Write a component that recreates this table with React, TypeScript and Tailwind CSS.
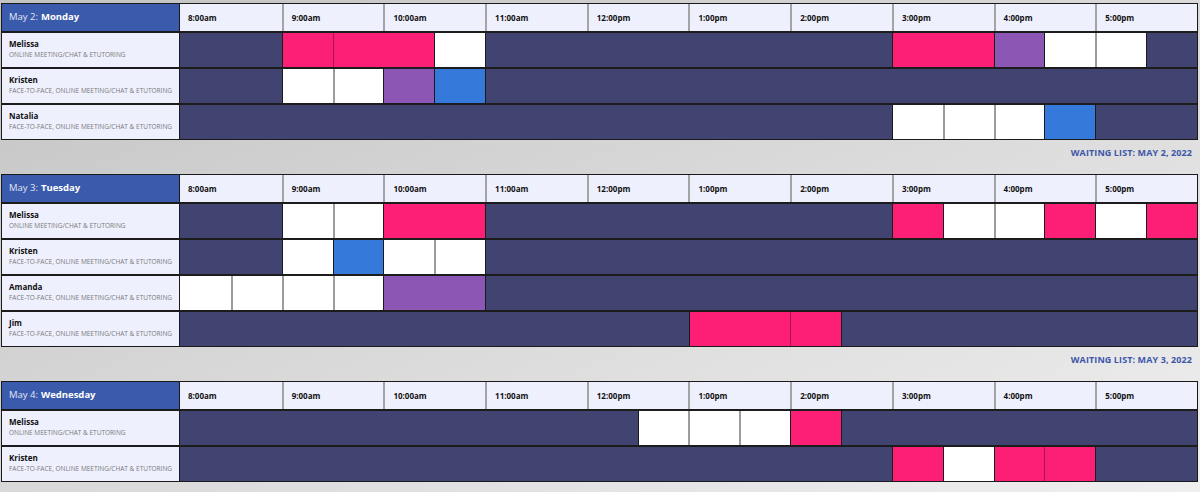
import React from "react";

type Kind = "d" | "p" | "u" | "b" | "w";
type Seg = [Kind, number];

const BG: Record<Kind, string> = {
  d: "bg-[#414370]",
  p: "bg-[#fd1f75]",
  u: "bg-[#8b56b4]",
  b: "bg-[#3579da]",
  w: "bg-white",
};

const SPAN: Record<number, string> = {
  1: "col-span-1",
  2: "col-span-2",
  3: "col-span-3",
  4: "col-span-4",
  5: "col-span-5",
  6: "col-span-6",
  7: "col-span-7",
  8: "col-span-8",
  9: "col-span-9",
  10: "col-span-10",
  11: "col-span-11",
  12: "col-span-12",
  13: "col-span-13",
  14: "col-span-14",
  15: "col-span-15",
  16: "col-span-16",
  17: "col-span-17",
  18: "col-span-18",
  19: "col-span-19",
  20: "col-span-20",
};

const TIMES = [
  "8:00am",
  "9:00am",
  "10:00am",
  "11:00am",
  "12:00pm",
  "1:00pm",
  "2:00pm",
  "3:00pm",
  "4:00pm",
  "5:00pm",
];

const ONLINE = "ONLINE MEETING/CHAT & ETUTORING";
const BOTH = "FACE-TO-FACE, ONLINE MEETING/CHAT & ETUTORING";

type Row = { name: string; mode: string; segs: Seg[] };
type Day = { date: string; day: string; wait: string; rows: Row[] };

const DAYS: Day[] = [
  {
    date: "May 2:",
    day: "Monday",
    wait: "WAITING LIST: MAY 2, 2022",
    rows: [
      {
        name: "Melissa",
        mode: ONLINE,
        segs: [["d", 2], ["p", 1], ["p", 2], ["w", 1], ["d", 8], ["p", 2], ["u", 1], ["w", 1], ["w", 1], ["d", 1]],
      },
      {
        name: "Kristen",
        mode: BOTH,
        segs: [["d", 2], ["w", 1], ["w", 1], ["u", 1], ["b", 1], ["d", 14]],
      },
      {
        name: "Natalia",
        mode: BOTH,
        segs: [["d", 14], ["w", 1], ["w", 1], ["w", 1], ["b", 1], ["d", 2]],
      },
    ],
  },
  {
    date: "May 3:",
    day: "Tuesday",
    wait: "WAITING LIST: MAY 3, 2022",
    rows: [
      {
        name: "Melissa",
        mode: ONLINE,
        segs: [["d", 2], ["w", 1], ["w", 1], ["p", 2], ["d", 8], ["p", 1], ["w", 1], ["w", 1], ["p", 1], ["w", 1], ["p", 1]],
      },
      {
        name: "Kristen",
        mode: BOTH,
        segs: [["d", 2], ["w", 1], ["b", 1], ["w", 1], ["w", 1], ["d", 14]],
      },
      {
        name: "Amanda",
        mode: BOTH,
        segs: [["w", 1], ["w", 1], ["w", 1], ["w", 1], ["u", 2], ["d", 14]],
      },
      {
        name: "Jim",
        mode: BOTH,
        segs: [["d", 10], ["p", 2], ["p", 1], ["d", 7]],
      },
    ],
  },
  {
    date: "May 4:",
    day: "Wednesday",
    wait: "WAITING LIST: MAY 4, 2022",
    rows: [
      {
        name: "Melissa",
        mode: ONLINE,
        segs: [["d", 9], ["w", 1], ["w", 1], ["w", 1], ["p", 1], ["d", 7]],
      },
      {
        name: "Kristen",
        mode: BOTH,
        segs: [["d", 14], ["p", 1], ["w", 1], ["p", 1], ["p", 1], ["d", 2]],
      },
    ],
  },
];

function sepClass(prev: Kind | null, cur: Kind): string {
  if (prev === null) return "";
  if (prev === cur) {
    if (cur === "w") return "border-l-2 border-[#9c9c9c]";
    if (cur === "p") return "border-l border-[#a8154f]";
    return "border-l border-[#1a1a1a]";
  }
  return "border-l border-[#1a1a1a]";
}

function ScheduleRow({ row }: { row: Row }) {
  return (
    <div className="flex h-[36px] border-t-2 border-[#1c1c1c]">
      <div className="w-[178px] shrink-0 bg-[#eef0fd] border-r border-[#1a1a1a] pl-[7px] pt-[5px]">
        <div className="text-[8px] leading-[11px] font-bold text-[#111]">{row.name}</div>
        <div className="mt-[2px] text-[6.5px] leading-[8px] text-[#7a7a7a] whitespace-nowrap">{row.mode}</div>
      </div>
      <div className="flex-1 grid grid-cols-20">
        {row.segs.map((s, i) => {
          const prev = i > 0 ? row.segs[i - 1][0] : null;
          return <div key={i} className={`${SPAN[s[1]]} ${BG[s[0]]} ${sepClass(prev, s[0])}`} />;
        })}
      </div>
    </div>
  );
}

function DayTable({ day }: { day: Day }) {
  return (
    <div>
      <div className="ml-[1px] w-[1197px] border border-[#1a1a1a]">
        <div className="flex h-[27px]">
          <div className="w-[178px] shrink-0 bg-[#3a5aab] border-r border-[#1a1a1a] pl-[7px] flex items-center text-[9.5px] text-white">
            <span className="text-[#e2e7f7]">{day.date}</span>
            <span className="ml-[3px] font-bold">{day.day}</span>
          </div>
          <div className="flex-1 grid grid-cols-10">
            {TIMES.map((t, i) => (
              <div
                key={t}
                className={`bg-[#eef0fd] flex items-center pl-[8px] text-[8px] font-bold text-[#111] ${
                  i > 0 ? "border-l-2 border-[#a4a4a4]" : ""
                }`}
              >
                {t}
              </div>
            ))}
          </div>
        </div>
        {day.rows.map((r) => (
          <ScheduleRow key={r.name} row={r} />
        ))}
      </div>
      <div className="h-[34px] pt-[6px] pr-[8px] text-right text-[9px] leading-[13px] font-bold text-[#3d56a8] tracking-[0.1px]">
        {day.wait}
      </div>
    </div>
  );
}

export default function App() {
  return (
    <div className="min-h-[492px] w-full pt-[3px] bg-[linear-gradient(to_bottom_right,#c3c3c3,#f0f0f0)] font-['Open_Sans',sans-serif]">
      {DAYS.map((d) => (
        <DayTable key={d.date} day={d} />
      ))}
    </div>
  );
}
